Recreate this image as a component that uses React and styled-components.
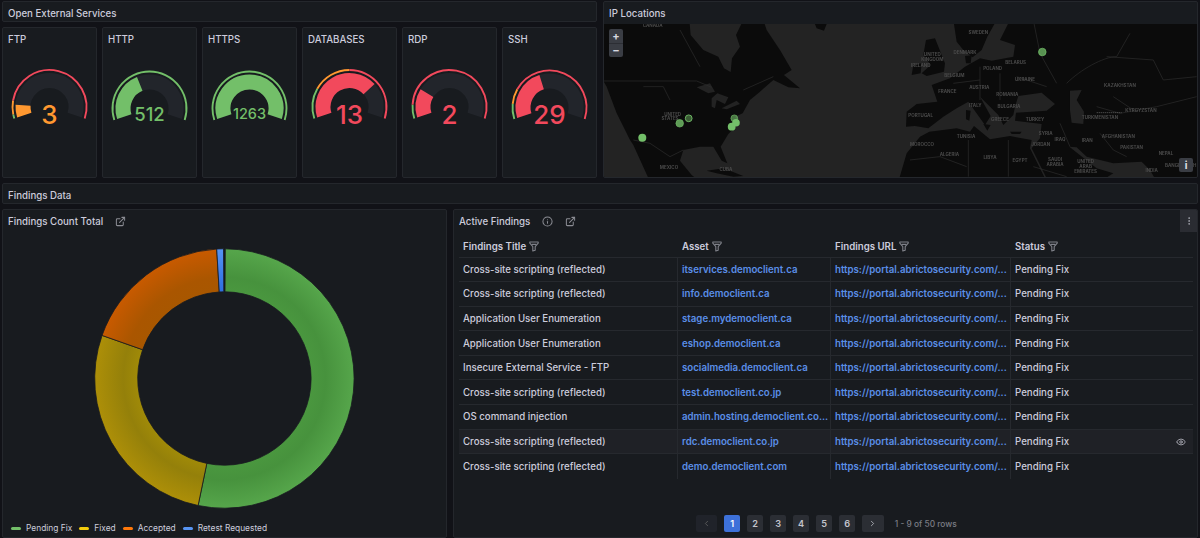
import React from "react";
import styled, { createGlobalStyle } from "styled-components";
import { ExternalLink, Info, Eye, ChevronLeft, ChevronRight, EllipsisVertical } from "lucide-react";

const Global = createGlobalStyle`
  html, body { margin: 0; padding: 0; background: #111217; }
  body { font-family: Inter, "Liberation Sans", sans-serif; overflow: hidden; }
  * { box-sizing: border-box; }
`;

const Dashboard = styled.div`
  width: 1200px;
  height: 538px;
  overflow: hidden;
  padding: 1px 2px 0;
  display: flex;
  flex-direction: column;
  gap: 5px;
  background: #111217;
`;
const TopGrid = styled.div`
  display: grid;
  grid-template-columns: 595px 595px;
  gap: 6px;
  height: 177px;
`;
const LeftColumn = styled.div`
  display: flex;
  flex-direction: column;
  gap: 5px;
`;
const RowHeader = styled.div`
  height: 21px;
  flex: none;
  display: flex;
  align-items: center;
  padding: 3px 5px 0;
  background: #181b1f;
  border: 1px solid #24272c;
  border-radius: 2px;
  color: #ccccdc;
  font-size: 9.7px;
  font-weight: 500;
`;
const GaugeRow = styled.div`
  display: grid;
  grid-template-columns: repeat(6, 95px);
  justify-content: space-between;
  height: 151px;
`;
const Panel = styled.section`
  background: #181b1f;
  border: 1px solid #24272c;
  border-radius: 2px;
  overflow: hidden;
  position: relative;
`;
const GaugePanel = styled(Panel)`
  display: flex;
  flex-direction: column;
`;
const PanelTitle = styled.div`
  height: 22px;
  flex: none;
  display: flex;
  align-items: center;
  padding: 0 5px;
  color: #ccccdc;
  font-size: 9.7px;
  font-weight: 500;
  gap: 12px;
  svg { color: #8b8d94; }
`;
const GaugeSvg = styled.svg`
  display: block;
  width: 93px;
  height: 127px;
`;
const MapPanel = styled(Panel)`
  display: flex;
  flex-direction: column;
`;
const MapArea = styled.div`
  position: relative;
  flex: 1;
  overflow: hidden;
  background: #232323;
`;
const MapSvg = styled.svg`
  display: block;
  width: 100%;
  height: 100%;
  filter: blur(0.3px);
`;
const ZoomControl = styled.div`
  position: absolute;
  left: 5px;
  top: 5px;
  width: 14px;
  display: flex;
  flex-direction: column;
  border-radius: 2px;
  overflow: hidden;
  background: #3a3d44;
`;
const ZoomBtn = styled.div`
  height: 14px;
  display: flex;
  align-items: center;
  justify-content: center;
  color: #d8d9e0;
  font-size: 11px;
  font-weight: 700;
  line-height: 1;
  & + & { border-top: 1px solid #2c2e34; }
`;
const MapInfo = styled.div`
  position: absolute;
  right: 4px;
  bottom: 5px;
  width: 14px;
  height: 14px;
  border-radius: 2px;
  background: #3a3d44;
  color: #e4e5ea;
  display: flex;
  align-items: center;
  justify-content: center;
  font-size: 10px;
  font-weight: 700;
`;
const BottomGrid = styled.div`
  display: grid;
  grid-template-columns: 445px 745px;
  gap: 6px;
  height: 345px;
`;
const DonutPanel = styled(Panel)`
  display: flex;
  flex-direction: column;
`;
const DonutSvg = styled.svg`
  display: block;
  width: 100%;
  height: 286px;
  flex: none;
  margin-top: 3px;
`;
const Legend = styled.div`
  display: flex;
  align-items: center;
  gap: 7px;
  padding: 2px 0 0 8px;
  color: #ccccdc;
  font-size: 8.4px;
`;
const LegendItem = styled.div`
  display: flex;
  align-items: center;
  gap: 5px;
`;
const Swatch = styled.i`
  display: block;
  width: 10px;
  height: 3px;
  border-radius: 2px;
  background: ${p => p.$color};
`;
const TablePanel = styled(Panel)`
  display: flex;
  flex-direction: column;
`;
const MenuButton = styled.div`
  position: absolute;
  top: 0;
  right: 0;
  width: 17px;
  height: 22px;
  background: #2a2c32;
  color: #a8a9b3;
  display: flex;
  align-items: center;
  justify-content: center;
`;
const Table = styled.div`
  margin: 4.5px 4px 0 5px;
  display: flex;
  flex-direction: column;
`;
const Row = styled.div`
  display: grid;
  grid-template-columns: 218px 153px 180px 1fr;
  height: ${p => (p.$head ? "21px" : "24.6px")};
  border-bottom: ${p => (p.$last ? "none" : "1px solid #26292e")};
  background: ${p => (p.$hover ? "#1f2126" : "transparent")};
  color: #ccccdc;
  font-size: 9.7px;
  font-weight: ${p => (p.$head ? 600 : 500)};
  position: relative;
`;
const Cell = styled.div`
  display: flex;
  align-items: center;
  gap: 3px;
  padding: 0 4px;
  min-width: 0;
  white-space: nowrap;
  border-left: 1px solid ${p => (p.$sep ? "#26292e" : "transparent")};
`;
const FirstCell = styled(Cell)`
  border-left: none;
`;
const FilterGlyph = styled.svg`
  width: 10px;
  height: 11px;
  flex: none;
  color: #7f8189;
`;
const LinkText = styled.span`
  white-space: nowrap;
  color: #5b8fe8;
  font-weight: 600;
`;
const HoverEye = styled.span`
  position: absolute;
  right: 7px;
  top: 7px;
  color: #b4b5be;
  display: flex;
`;
const Pager = styled.div`
  margin-top: 36px;
  margin-left: 241.5px;
  display: flex;
  align-items: center;
  gap: 7px;
  color: #7b7d85;
  font-size: 8.4px;
  font-weight: 500;
`;
const PageBtn = styled.div`
  width: ${p => (p.$wide ? "21.6px" : "16px")};
  height: 17.5px;
  border-radius: 2px;
  background: ${p => (p.$active ? "#3d71d9" : p.$dim ? "#20232a" : "#2b2e34")};
  color: ${p => (p.$active ? "#fff" : p.$dim ? "#666" : "#c3c4cc")};
  display: flex;
  align-items: center;
  justify-content: center;
  font-size: 9.2px;
  font-weight: 600;
`;
const PagerInfo = styled.span`
  margin-left: 4px;
`;

const G = "#73bf69", O = "#ff9830", R = "#f2495c";
const CX = 46.5, START = -108, SWEEP = 216;
const pt = (cy, r, deg) => {
  const a = ((deg - 90) * Math.PI) / 180;
  return [CX + r * Math.cos(a), cy + r * Math.sin(a)];
};
const arc = (cy, r, from, to) => {
  const a1 = START + from * SWEEP, a2 = START + to * SWEEP;
  const [x1, y1] = pt(cy, r, a1), [x2, y2] = pt(cy, r, a2);
  return `M${x1.toFixed(2)} ${y1.toFixed(2)}A${r} ${r} 0 ${a2 - a1 > 180 ? 1 : 0} 1 ${x2.toFixed(2)} ${y2.toFixed(2)}`;
};

const gauges = [
  { title: "FTP", value: "3", frac: 0.1, color: O, size: 26, cy: 57, ty: 64.5, ring: [[0, 0.03, G], [0.03, 0.13, O], [0.13, 1, R]] },
  { title: "HTTP", value: "512", frac: 0.4, color: G, size: 18.5, cy: 58.5, ty: 63.8, ring: [[0, 1, G]] },
  { title: "HTTPS", value: "1263", frac: 1, color: G, size: 14.5, cy: 58.5, ty: 63.8, ring: [[0, 1, G]] },
  { title: "DATABASES", value: "13", frac: 0.72, color: R, size: 26, cy: 57, ty: 64.5, ring: [[0, 0.22, G], [0.22, 0.5, O], [0.5, 1, R]] },
  { title: "RDP", value: "2", frac: 0.23, color: R, size: 26, cy: 57, ty: 64.5, ring: [[0, 0.1, G], [0.1, 1, R]] },
  { title: "SSH", value: "29", frac: 0.42, color: R, size: 26, cy: 57.5, ty: 64.5, ring: [[0, 0.11, G], [0.11, 0.22, O], [0.22, 1, R]] },
];

function Gauge({ g }) {
  return (
    <GaugePanel>
      <PanelTitle>{g.title}</PanelTitle>
      <GaugeSvg viewBox="0 0 93 127">
        <path d={arc(g.cy, 26.5, 0, 1)} fill="none" stroke="#22252b" strokeWidth="15" />
        <path d={arc(g.cy, 26.5, 0, g.frac)} fill="none" stroke={g.color} strokeWidth="15" />
        {g.ring.map(([a, b, c], i) => (
          <path key={i} d={arc(g.cy, 37, a, b)} fill="none" stroke={c} strokeWidth="1.9" />
        ))}
        <text x={CX} y={g.ty} textAnchor="middle" dominantBaseline="central" fill={g.color}
          fontFamily="Inter, sans-serif" fontWeight="500" fontSize={g.size}>{g.value}</text>
      </GaugeSvg>
    </GaugePanel>
  );
}

const LAND = "#0b0b0b";
const WATER = "#232323";
const BORDER = "#2e2e2e";

const labelsNA = [
  ["CANADA", 158, 80], ["UNITED", 218, 347], ["STATES", 210, 361], ["MEXICO", 207, 507], ["CUBA", 378, 514],
];
const labelsEU = [
  ["SWEDEN", 235, 102], ["DENMARK", 195, 162], ["UNITED", 97, 167], ["KINGDOM", 97, 184], ["IRELAND", 62, 201],
  ["BELARUS", 347, 193], ["POLAND", 278, 210], ["BELGIUM", 163, 231], ["UKRAINE", 375, 244], ["FRANCE", 142, 278],
  ["AUSTRIA", 238, 267], ["ROMANIA", 322, 287], ["KAZAKHSTAN", 660, 262], ["ITALY", 226, 322], ["BULGARIA", 327, 324],
  ["KYRGYZSTAN", 723, 335], ["PORTUGAL", 62, 352], ["GREECE", 300, 362], ["TURKEY", 405, 362], ["TURKMENISTAN", 600, 358],
  ["SYRIA", 437, 406], ["TUNISIA", 198, 414], ["AFGHANISTAN", 655, 414], ["IRAQ", 480, 422], ["IRAN", 562, 425],
  ["MOROCCO", 66, 439], ["JORDAN", 422, 439], ["PAKISTAN", 695, 446], ["ALGERIA", 148, 469], ["NEPAL", 798, 466],
  ["LIBYA", 270, 478], ["EGYPT", 360, 485], ["SAUDI", 465, 483], ["ARABIA", 465, 497], ["BANGLADESH", 842, 500],
  ["UNITED", 557, 489], ["ARAB", 557, 503], ["EMIRATES", 557, 518], ["INDIA", 755, 517],
];

function MapLabels({ items }) {
  return items.map(([t, x, y], i) => (
    <text key={i} x={x} y={y} textAnchor="middle" fontFamily="Inter, sans-serif" fontWeight="700" fontSize="13.5" fill="#4a4a4a">{t}</text>
  ));
}

function WorldMap() {
  return (
    <MapSvg viewBox="604 24 593 153" preserveAspectRatio="none">
      <g transform="translate(600,0) scale(0.3333)">
        <path fill={LAND} d="M0 60L268 60L272 105L310 150L355 170L372 205L392 216L396 175L420 140L408 105L430 60L490 60L500 90L540 150L575 210L552 225L600 265L565 262L520 240L480 275L450 300L428 340L405 350L415 372L385 402L362 440L382 490L365 482L340 440L300 440L250 450L240 482L275 525L300 545L150 545L100 435L90 420L50 340L20 260L0 225Z" />
        <path fill={WATER} d="M290 262L330 250L345 275L325 280ZM335 295L352 280L385 292L375 312L350 300L345 325L335 320ZM365 325L410 302L420 312L380 328Z" />
        <path fill={LAND} d="M320 512L370 505L430 528L400 530L350 520ZM640 60L685 60L672 92L650 85Z" />
        <path fill="none" stroke={BORDER} strokeWidth="2" d="M12 243L290 243L335 262M100 420L150 430L210 470L250 450M130 260L190 260L210 300M240 90L300 200M430 270L520 230" />
        <MapLabels items={labelsNA} />
      </g>
      <g transform="translate(900,0) scale(0.3333)">
        <path fill={LAND} d="M330 60L910 60L910 545L770 545L750 510L725 485L640 490L600 480L560 470L530 442L508 440L590 505L640 520L600 545L445 545L395 445L420 415L425 372L345 362L348 338L440 332L465 312L425 278L355 288L345 320L340 345L310 375L295 345L240 290L272 348L255 375L205 305L170 325L130 350L85 385L45 378L18 380L20 335L50 312L112 305L95 255L150 235L195 200L240 175L275 182L340 170L345 135L300 120Z" />
        <path fill={LAND} d="M-5 545L20 460L60 410L88 395L170 385L210 395L222 378L270 418L330 408L395 420L390 445L440 545Z" />
        <path fill={LAND} d="M160 60L290 60L262 110L245 150L218 172L190 150L170 125ZM195 168L215 166L212 190L198 190ZM78 120L105 115L135 190L132 215L80 228L65 220L92 195L70 165ZM40 195L65 190L62 220L35 225ZM250 372L272 375L262 392ZM198 330L212 332L208 362L198 358ZM330 395L365 395L360 402L335 402Z" />
        <path fill={WATER} d="M510 272L545 270L530 300L552 335L550 372L515 368L510 330Z" />
        <path fill="none" stroke={BORDER} strokeWidth="2" d="M500 250C540 210 610 170 650 170L690 100M620 170L760 180L790 240L890 230M590 320L660 340L770 320L890 290M480 370L510 440M600 400L640 450L680 470M205 420L205 530M325 420L325 530M400 500L500 530M30 480L120 470L200 500M240 200L240 300M300 220L300 300M160 250L240 240M350 230L440 260M640 290L700 330M400 60L420 160L470 250" />
        <path fill="none" stroke="#8a8a8a" strokeWidth="1.5" strokeDasharray="4 2" d="M590 338L665 338" />
        <MapLabels items={labelsEU} />
      </g>
      <g fill={G}>
        <circle cx="642.3" cy="137.7" r="4" />
        <circle cx="679.7" cy="123.3" r="3.8" fillOpacity=".8" stroke={G} strokeWidth=".6" />
        <circle cx="688.7" cy="118.3" r="3.4" fillOpacity=".45" stroke={G} strokeWidth=".9" />
        <circle cx="734.3" cy="118.3" r="3.4" fillOpacity=".6" stroke={G} strokeWidth=".6" />
        <circle cx="736" cy="122.7" r="3.8" />
        <circle cx="731.7" cy="126.7" r="3.9" />
        <circle cx="1042.3" cy="52" r="3.8" fillOpacity=".75" stroke={G} strokeWidth=".7" />
      </g>
    </MapSvg>
  );
}

const DX = 221.4, DY = 143.5, RO = 129.7, RI = 86.7;
const dp = (r, deg) => {
  const a = ((deg - 90) * Math.PI) / 180;
  return [DX + r * Math.cos(a), DY + r * Math.sin(a)];
};
const slice = (a1, a2) => {
  const [x1, y1] = dp(RO, a1), [x2, y2] = dp(RO, a2), [x3, y3] = dp(RI, a2), [x4, y4] = dp(RI, a1);
  const large = a2 - a1 > 180 ? 1 : 0;
  return `M${x1} ${y1}A${RO} ${RO} 0 ${large} 1 ${x2} ${y2}L${x3} ${y3}A${RI} ${RI} 0 ${large} 0 ${x4} ${y4}Z`;
};
const slices = [
  { id: "g", from: 0.4, to: 191.7, inner: "#4a973f", mid: "#47923d", outer: "#56a64b" },
  { id: "y", from: 191.7, to: 289.4, inner: "#a08a08", mid: "#94800a", outer: "#ad8f08" },
  { id: "o", from: 289.4, to: 356.6, inner: "#a85700", mid: "#aa5600", outer: "#c85a00" },
  { id: "b", from: 356.6, to: 359.6, inner: "#2f6fe0", mid: "#3a7ae8", outer: "#5794f2" },
];

function Donut() {
  return (
    <DonutSvg viewBox="0 0 443 286">
      <defs>
        {slices.map(s => (
          <radialGradient key={s.id} id={`grad-${s.id}`} gradientUnits="userSpaceOnUse" cx={DX} cy={DY} r={RO}>
            <stop offset={RI / RO} stopColor={s.inner} />
            <stop offset="0.78" stopColor={s.mid} />
            <stop offset="1" stopColor={s.outer} />
          </radialGradient>
        ))}
      </defs>
      {slices.map(s => (
        <path key={s.id} d={slice(s.from, s.to)} fill={`url(#grad-${s.id})`} stroke="#181b1f" strokeWidth=".8" />
      ))}
    </DonutSvg>
  );
}

function FilterIcon() {
  return (
    <FilterGlyph viewBox="0 0 10 11" fill="none" stroke="currentColor" strokeWidth="1.1" strokeLinejoin="round">
      <path d="M.8 1h8.4v1.2L6.2 5.6v3.6L3.8 10V5.6L.8 2.2z" />
      <path d="M2.6 3.4h4.8" />
    </FilterGlyph>
  );
}

const legend = [["Pending Fix", "#73bf69"], ["Fixed", "#f2cc0c"], ["Accepted", "#ff780a"], ["Retest Requested", "#5794f2"]];
const U = "https://portal.abrictosecurity.com/...";
const rows = [
  ["Cross-site scripting (reflected)", "itservices.democlient.ca"],
  ["Cross-site scripting (reflected)", "info.democlient.ca"],
  ["Application User Enumeration", "stage.mydemoclient.ca"],
  ["Application User Enumeration", "eshop.democlient.ca"],
  ["Insecure External Service - FTP", "socialmedia.democlient.ca"],
  ["Cross-site scripting (reflected)", "test.democlient.co.jp"],
  ["OS command injection", "admin.hosting.democlient.co..."],
  ["Cross-site scripting (reflected)", "rdc.democlient.co.jp"],
  ["Cross-site scripting (reflected)", "demo.democlient.com"],
];
const heads = ["Asset", "Findings URL", "Status"];
const pages = ["1", "2", "3", "4", "5", "6"];

export default function App() {
  return (
    <>
      <Global />
      <Dashboard>
        <TopGrid>
          <LeftColumn>
            <RowHeader>Open External Services</RowHeader>
            <GaugeRow>
              {gauges.map(g => <Gauge key={g.title} g={g} />)}
            </GaugeRow>
          </LeftColumn>
          <MapPanel>
            <PanelTitle>IP Locations</PanelTitle>
            <MapArea>
              <WorldMap />
              <ZoomControl>
                <ZoomBtn>+</ZoomBtn>
                <ZoomBtn>−</ZoomBtn>
              </ZoomControl>
              <MapInfo>i</MapInfo>
            </MapArea>
          </MapPanel>
        </TopGrid>
        <RowHeader>Findings Data</RowHeader>
        <BottomGrid>
          <DonutPanel>
            <PanelTitle>Findings Count Total <ExternalLink size={11} strokeWidth={2.2} /></PanelTitle>
            <Donut />
            <Legend>
              {legend.map(([t, c]) => (
                <LegendItem key={t}><Swatch $color={c} />{t}</LegendItem>
              ))}
            </Legend>
          </DonutPanel>
          <TablePanel>
            <PanelTitle>Active Findings <Info size={11} strokeWidth={2.2} /> <ExternalLink size={11} strokeWidth={2.2} /></PanelTitle>
            <MenuButton><EllipsisVertical size={10} /></MenuButton>
            <Table>
              <Row $head>
                <FirstCell>Findings Title <FilterIcon /></FirstCell>
                {heads.map(h => <Cell key={h}>{h} <FilterIcon /></Cell>)}
              </Row>
              {rows.map(([t, a], i) => (
                <Row key={i} $hover={i === 7} $last={i === 8}>
                  <FirstCell>{t}</FirstCell>
                  <Cell $sep><LinkText>{a}</LinkText></Cell>
                  <Cell $sep><LinkText>{U}</LinkText></Cell>
                  <Cell $sep>Pending Fix</Cell>
                  {i === 7 && <HoverEye><Eye size={10} /></HoverEye>}
                </Row>
              ))}
            </Table>
            <Pager>
              <PageBtn $wide $dim><ChevronLeft size={9} /></PageBtn>
              {pages.map((p, i) => <PageBtn key={p} $active={i === 0}>{p}</PageBtn>)}
              <PageBtn $wide><ChevronRight size={9} /></PageBtn>
              <PagerInfo>1 - 9 of 50 rows</PagerInfo>
            </Pager>
          </TablePanel>
        </BottomGrid>
      </Dashboard>
    </>
  );
}
